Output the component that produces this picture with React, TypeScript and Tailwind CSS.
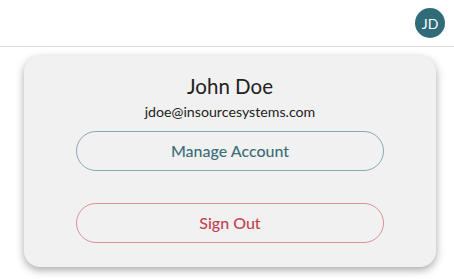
import React from 'react';

export default function App() {
  return (
    <div className="w-[454px] h-[279px] bg-white overflow-hidden font-['Lato',sans-serif]">
      <header className="h-[47px] border-b border-[#dcdcdc] flex items-center justify-end pr-[9px]">
        <div className="w-[30px] h-[30px] rounded-full bg-[#2f6b78] text-white text-[14px] flex items-center justify-center">
          JD
        </div>
      </header>

      <div className="px-[18px] pt-[9px]">
        <div className="ml-[6px] w-[412px] h-[211px] bg-[#f1f1f1] rounded-[16px] shadow-[0_3px_8px_rgba(0,0,0,0.35)] flex flex-col items-center pt-[17px]">
          <div className="text-[20.5px] leading-[26px] text-[#222]">John Doe</div>
          <div className="mt-[4px] text-[14.2px] leading-[18px] text-[#222]">jdoe@insourcesystems.com</div>

          <button className="mt-[10px] w-[308px] h-[40px] rounded-full border border-[#86a9b2] text-[16px] font-medium text-[#3c6d79]">
            Manage Account
          </button>
          <button className="mt-[32px] w-[308px] h-[40px] rounded-full border border-[#dc8f97] text-[16px] font-medium text-[#c3424f]">
            Sign Out
          </button>
        </div>
      </div>
    </div>
  );
}
